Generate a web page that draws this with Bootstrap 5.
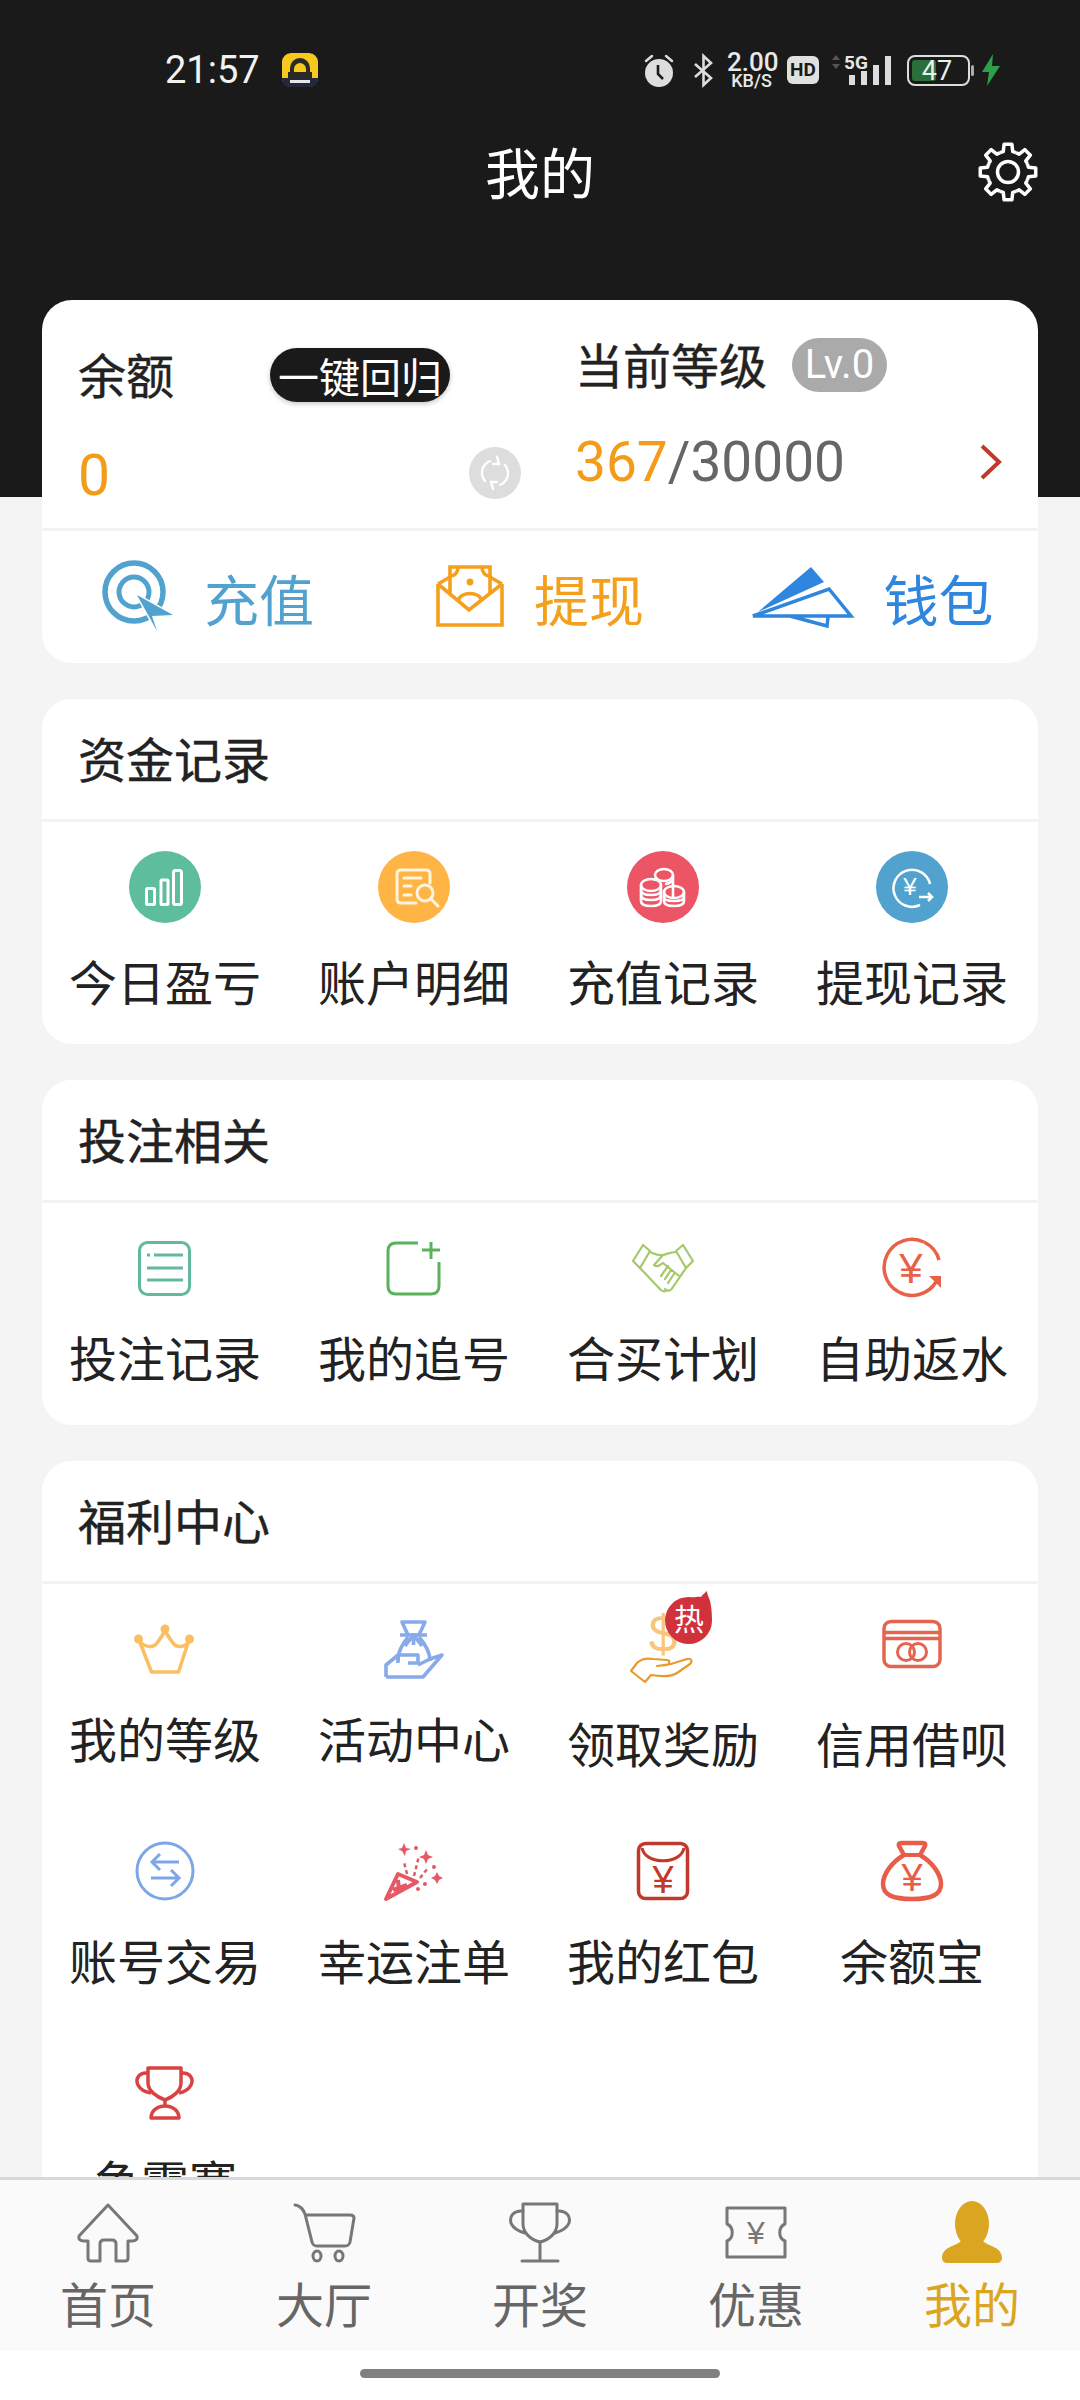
<!DOCTYPE html>
<html lang="zh-CN">
<head>
<meta charset="utf-8">
<title>我的</title>
<link href="https://cdn.jsdelivr.net/npm/bootstrap@5.3.0/dist/css/bootstrap.min.css" rel="stylesheet">
<style>
html,body{width:1080px;height:2400px;overflow:hidden}
body{background:#f4f4f4;color:#222;font-family:"Noto Sans CJK SC","Noto Sans",sans-serif;line-height:1.2}
svg{display:block;overflow:visible}
.ysign{font-family:"Liberation Sans",sans-serif}
.hdr{height:497px;background:#1a1a1a;padding-top:50px}
.sbar{height:40px;padding:0 80px 0 165px;color:#e8e8e8}
.clock{font:400 38px/38px Roboto,sans-serif;color:#f2f2f2;width:93px;margin-right:24px;white-space:nowrap}
.speed{width:49px;font-family:Roboto,sans-serif;font-weight:500;text-align:center;color:#e8e8e8}
.speed-a{font-size:26px;line-height:21px}
.speed-b{font-size:18px;line-height:15px}
.hd{width:32px;height:28px;background:#e0e0e0;color:#1a1a1a;border-radius:6px;font:700 19px/28px Roboto,sans-serif;text-align:center}
.ttl-row{height:60px;margin-top:52px;padding:0 42px}
.ttl{font-size:55px;line-height:57px;height:60px;color:#fff}
.gear{width:60px;height:60px}
.side{width:60px}
.wrap{margin-top:-197px;padding:0 42px;gap:36px}
.panel{--bs-card-border-radius:30px;--bs-card-inner-border-radius:30px;border:0;background:#fff;overflow:hidden}
.panel-top{height:231px;border-bottom:3px solid #f3f3f3}
.lft{padding:48px 19px 0 36px}
.rgt{padding:38px 36px 0 35px}
.lb{font-size:48px;line-height:50px;height:54px;-webkit-text-stroke:.4px #222}
.lb-w{width:192px}
.pill{width:180px;height:54px;border-radius:27px;background:#1a1a1a;color:#fff;font-size:41px;line-height:54px;text-align:center;box-shadow:0 2px 5px rgba(0,0,0,.22)}
.bal{margin-top:46px;height:54px}
.big{font:400 55px/54px Roboto,sans-serif}
.zero{font-size:57px;margin-top:2px}
.or{color:#f39c19}
.gy{color:#666}
.sync{width:52px;height:52px;border-radius:50%;background:#ddd;margin-bottom:4px}
.lv{width:95px;height:54px;border-radius:27px;background:#aaa;color:#fff;font:400 40px/54px Roboto,sans-serif;text-align:center;margin-left:25px}
.lv-t{width:192px}
.prog{margin-top:40px;height:60px}
.acts{height:132px}
.act{font-size:55px;line-height:60px;gap:30px}
.a1{color:#52a2d0}.a2{color:#f5a01c}.a3{color:#2e86de}
.sect{height:123px;border-bottom:3px solid #f3f3f3;padding:0 36px;font-size:48px;line-height:117px;background:#fff;color:#222;-webkit-text-stroke:.4px #222}
.grid-row{margin-left:-1.5px;margin-right:1.5px}
.tile{height:222px;padding-top:29px}
.t4{height:221px}
.ico{width:72px;height:72px;position:relative}
.cap{font-size:48px;line-height:60px;height:60px;color:#222;white-space:nowrap}
.m27{margin-top:27px}.m22{margin-top:22px}.m23{margin-top:23px}
.hot{position:absolute;left:38px;top:-22px;width:48px;height:54px}
.hot-t{position:absolute;left:0;right:0;top:8px;text-align:center;color:#fff;font-size:30px;line-height:36px}
.tabwrap{position:fixed;left:0;right:0;bottom:0;height:223px;background:#fff;border-top:3px solid #d8d8d8}
.tabs{height:171px;background:#fafafa}
.tab{width:216px;padding-top:20px;color:#666;font-size:48px;line-height:56px;text-decoration:none}
.tab .tic{width:64px;height:64px;margin-bottom:10px}
.tab-on{color:#daa520}
.hbar{width:360px;height:9px;border-radius:5px;background:#808080;margin:18px auto 0}
</style>
</head>
<body>
<header class="hdr">
  <div class="sbar d-flex align-items-center">
    <span class="clock">21:57</span>
    <svg width="36" height="34" viewBox="0 0 36 34"><rect width="36" height="34" rx="9" fill="#f7c81e"/><path d="M0 25H36V26a8 8 0 0 1-8 8H8a8 8 0 0 1-8-8Z" fill="#24283a"/><path d="M8 24V15a10 10 0 0 1 20 0V24H24V16a6 6 0 0 0-12 0V24Z" fill="#2c2a22"/><rect x="6" y="19" width="24" height="6" fill="#2c2a22"/><rect x="8" y="27" width="20" height="3" fill="#e6e6e6"/></svg>
    <div class="ms-auto d-flex align-items-center">
      <svg width="32" height="33" viewBox="0 0 32 33"><circle cx="16" cy="19" r="14" fill="#ddd"/><path d="M3 7 9 2M29 7 23 2" stroke="#ddd" stroke-width="2.5" stroke-linecap="round"/><path d="M15 11V20L20 25" fill="none" stroke="#1a1a1a" stroke-width="2.6"/></svg>
      <svg style="margin-left:18px" width="21" height="31" viewBox="0 0 21 31"><path d="M2 9 18 23 10.5 30V1L18 8 2 22" fill="none" stroke="#ddd" stroke-width="2.6"/></svg>
      <div class="speed" style="margin-left:13px"><div class="speed-a">2.00</div><div class="speed-b">KB/S</div></div>
      <div class="hd" style="margin-left:11px">HD</div>
      <svg style="margin-left:13px" width="59" height="32" viewBox="0 0 59 32"><path d="M4 1 8 6H0ZM4 15 0 10H8Z" fill="#555"/><text x="12" y="15" font-family="Roboto,sans-serif" font-weight="700" font-size="19" fill="#e6e6e6">5G</text><rect x="17" y="21" width="6" height="10" fill="#ddd"/><rect x="29" y="17" width="6" height="14" fill="#ddd"/><rect x="41" y="11" width="6" height="20" fill="#ddd"/><rect x="53" y="2" width="6" height="29" fill="#ddd"/></svg>
      <svg style="margin-left:16px" width="67" height="31" viewBox="0 0 67 31"><rect x="1" y="1" width="61" height="29" rx="7" fill="none" stroke="#ddd" stroke-width="2"/><rect x="5" y="5" width="24" height="21" rx="3" fill="#2a6e3a"/><rect x="64" y="10" width="3" height="11" rx="1.5" fill="#aaa"/><text x="30" y="25" text-anchor="middle" font-family="Roboto,sans-serif" font-size="27" fill="#e8f2e8">47</text></svg>
      <svg style="margin-left:8px" width="18" height="32" viewBox="0 0 18 32"><path d="M11 0 0 18H7L5 32 18 12H10Z" fill="#2f9e4a"/></svg>
    </div>
  </div>
  <div class="ttl-row d-flex align-items-center">
    <div class="side"></div>
    <div class="ttl flex-grow-1 text-center">我的</div>
    <svg class="gear" viewBox="0 0 60 60" fill="none" stroke="#fff" stroke-width="3.5" stroke-linejoin="round">
      <defs><path id="tooth" d="M21.96 10.6 25.28 9.55 26.1 2.27H33.9L34.72 9.55 38.04 10.6"/></defs>
      <use href="#tooth"/><use href="#tooth" transform="rotate(45 30 30)"/><use href="#tooth" transform="rotate(90 30 30)"/><use href="#tooth" transform="rotate(135 30 30)"/><use href="#tooth" transform="rotate(180 30 30)"/><use href="#tooth" transform="rotate(225 30 30)"/><use href="#tooth" transform="rotate(270 30 30)"/><use href="#tooth" transform="rotate(315 30 30)"/>
      <circle cx="30" cy="30" r="10.5"/>
    </svg>
  </div>
</header>

<main class="wrap d-flex flex-column">
  <section class="card panel">
    <div class="row g-0 panel-top">
      <div class="col-6 lft">
        <div class="d-flex align-items-center">
          <span class="lb lb-w">余额</span>
          <span class="pill">一键回归</span>
        </div>
        <div class="bal d-flex align-items-center justify-content-between">
          <span class="big or zero">0</span>
          <span class="sync d-flex align-items-center justify-content-center">
            <svg width="32" height="36" viewBox="0 0 32 36" fill="none" stroke="#fff" stroke-width="2.4" stroke-linecap="round"><path d="M6 26C1 20 2 10 11 6"/><path d="M26 10C31 16 30 26 21 30"/><path d="M18 2 20 9 14 9"/><path d="M14 34 12 27 18 27"/></svg>
          </span>
        </div>
      </div>
      <div class="col-6 rgt">
        <div class="d-flex align-items-center">
          <span class="lb lv-t">当前等级</span>
          <span class="lv">Lv.0</span>
        </div>
        <div class="prog d-flex align-items-center justify-content-between">
          <span class="big"><span class="or">367</span><span class="gy">/30000</span></span>
          <svg width="22" height="36" viewBox="0 0 22 36" fill="none" stroke="#c0392b" stroke-width="4"><path d="M2 2 19 18 2 34"/></svg>
        </div>
      </div>
    </div>
    <div class="row g-0 acts">
      <div class="col-4 act a1 d-flex align-items-center justify-content-center">
        <svg width="72" height="72" viewBox="0 0 72 72"><circle cx="32" cy="31" r="29" fill="none" stroke="#52a2d0" stroke-width="5.5"/><circle cx="32" cy="31" r="15" fill="none" stroke="#52a2d0" stroke-width="5"/><path d="M35 34 71 54 50 55 55 70Z" fill="#52a2d0" stroke="#fff" stroke-width="3" paint-order="stroke"/></svg>
        <span>充值</span>
      </div>
      <div class="col-4 act a2 d-flex align-items-center justify-content-center">
        <svg width="68" height="64" viewBox="0 0 68 64" fill="none" stroke="#f5a01c" stroke-width="3.6"><path d="M2 19V60H66V19"/><path d="M2 19 14 12M66 19 54 12"/><path d="M2 19 33 45 66 19"/><path d="M14 28V2H54V28"/><path d="M14 11C19 11 22 7 22 2M54 11C49 11 46 7 46 2"/><circle cx="34" cy="17" r="3.4" fill="#f5a01c" stroke="none"/><path d="M22 36C25 26 43 26 46 36"/></svg>
        <span>提现</span>
      </div>
      <div class="col-4 act a3 d-flex align-items-center justify-content-center">
        <svg width="103" height="60" viewBox="0 0 103 60"><path d="M61 0 74 15 8 45Z" fill="#2e86de"/><path d="M3 49 79 22 101 49ZM40 49 77 59 78 50" fill="none" stroke="#2e86de" stroke-width="3.5"/></svg>
        <span>钱包</span>
      </div>
    </div>
  </section>

  <section class="card panel">
    <div class="sect">资金记录</div>
    <div class="row g-0 grid-row">
      <div class="col-3 tile d-flex flex-column align-items-center">
        <div class="ico"><svg width="72" height="72" viewBox="0 0 72 72"><circle cx="36" cy="36" r="36" fill="#5ebd9c"/><g fill="none" stroke="#fff" stroke-width="3"><rect x="17.5" y="37.5" width="8" height="16" rx="1"/><rect x="32" y="29" width="7" height="24.5" rx="1"/><rect x="44.5" y="19.5" width="8" height="34" rx="2"/></g></svg></div>
        <div class="cap m27">今日盈亏</div>
      </div>
      <div class="col-3 tile d-flex flex-column align-items-center">
        <div class="ico"><svg width="72" height="72" viewBox="0 0 72 72"><circle cx="36" cy="36" r="36" fill="#ffb545"/><g fill="none" stroke="#fff4df" stroke-width="3" stroke-linecap="round"><path d="M52 32V23Q52 19 48 19H23Q19 19 19 23V48Q19 52 23 52H38"/><path d="M26 27H43M26 35H33M26 44H33"/><circle cx="47" cy="42" r="8"/><path d="M53 48 60 55"/></g></svg></div>
        <div class="cap m27">账户明细</div>
      </div>
      <div class="col-3 tile d-flex flex-column align-items-center">
        <div class="ico"><svg width="72" height="72" viewBox="0 0 72 72"><circle cx="36" cy="36" r="36" fill="#ec5565"/><g fill="none" stroke="#fff" stroke-width="2.6"><ellipse cx="37" cy="24" rx="9" ry="6"/><path d="M46 24V46M28 27V30"/><path d="M46 29Q42 33 38 33M46 35H44"/><ellipse cx="24" cy="34" rx="10" ry="6"/><path d="M14 34V50Q14 55 24 55T34 50V34"/><path d="M14 39Q14 44 24 44T34 39M14 44Q14 49 24 49T34 44"/><ellipse cx="47" cy="41" rx="10" ry="6"/><path d="M37 41V50Q37 55 47 55T57 50V41"/><path d="M37 46Q37 50 47 50T57 46"/></g></svg></div>
        <div class="cap m27">充值记录</div>
      </div>
      <div class="col-3 tile d-flex flex-column align-items-center">
        <div class="ico"><svg width="72" height="72" viewBox="0 0 72 72"><circle cx="36" cy="36" r="36" fill="#52a2d0"/><path d="M44 54A18.500 18.500 0 1 1 54 33" fill="none" stroke="#fff" stroke-width="2.5"/><text class="ysign" x="34" y="44" text-anchor="middle" font-size="24" fill="#fff">¥</text><path d="M43 46H56M52 42 56 46 52 50" fill="none" stroke="#fff" stroke-width="2.5"/></svg></div>
        <div class="cap m27">提现记录</div>
      </div>
    </div>
  </section>

  <section class="card panel">
    <div class="sect">投注相关</div>
    <div class="row g-0 grid-row">
      <div class="col-3 tile d-flex flex-column align-items-center">
        <div class="ico"><svg width="72" height="72" viewBox="0 0 72 72" fill="none" stroke="#62b9a0" stroke-width="3"><rect x="10.500" y="10.500" width="50" height="52" rx="8"/><path d="M18 23H21M25 23H54M18 36H54M18 48H54"/></svg></div>
        <div class="cap m22">投注记录</div>
      </div>
      <div class="col-3 tile d-flex flex-column align-items-center">
        <div class="ico"><svg width="72" height="72" viewBox="0 0 72 72" fill="none" stroke="#5cb25c" stroke-width="3"><path d="M40 11H18Q10 11 10 19V54Q10 62 18 62H53Q61 62 61 54V30"/><path d="M53 10V27M44 18H62"/></svg></div>
        <div class="cap m22">我的追号</div>
      </div>
      <div class="col-3 tile d-flex flex-column align-items-center">
        <div class="ico"><svg width="72" height="72" viewBox="0 0 72 72" fill="none" stroke="#a5c96a" stroke-width="2.2" stroke-linejoin="round" stroke-linecap="round"><path d="M16 13 23 19 13 36 6 29ZM56 13 49 19 59 36 66 29Z"/><path d="M23 20C28 22 30 24 36 23C40 22 44 20 49 20"/><path d="M13 36 32 56C35 60 38 60 40 58M59 36 46 55C44 59 40 60 38 57"/><path d="M36 23 27 33C30 36 33 33 36 31L52 44M44 38 38 47M47 42 41 51M41 34 34 44"/></svg></div>
        <div class="cap m22">合买计划</div>
      </div>
      <div class="col-3 tile d-flex flex-column align-items-center">
        <div class="ico"><svg width="72" height="72" viewBox="0 0 72 72"><path d="M48 10A28 28 0 1 0 60 50" fill="none" stroke="#e8624a" stroke-width="3.5"/><path d="M48 10C56 14 61 20 63 28" fill="none" stroke="#e8624a" stroke-width="3.5"/><path d="M53 44H65V56Z" fill="#e8624a"/><text class="ysign" x="35" y="51" text-anchor="middle" font-size="42" fill="#e8624a">¥</text></svg></div>
        <div class="cap m22">自助返水</div>
      </div>
    </div>
  </section>

  <section class="card panel">
    <div class="sect">福利中心</div>
    <div class="row g-0 grid-row">
      <div class="col-3 tile t4 d-flex flex-column align-items-center">
        <div class="ico"><svg width="72" height="72" viewBox="0 0 72 72" fill="#f9bf62"><circle cx="9.500" cy="26" r="4.500"/><circle cx="36" cy="16" r="4.500"/><circle cx="60.500" cy="26" r="4.500"/><path d="M10 27 22.500 59H49.500L60 27C58 34 48 36 44 30 41 26 38 22 36 17 34 22 31 26 28 30 24 36 14 34 10 27Z" fill="none" stroke="#f9bf62" stroke-width="3.5" stroke-linejoin="round"/></svg></div>
        <div class="cap m22">我的等级</div>
      </div>
      <div class="col-3 tile t4 d-flex flex-column align-items-center">
        <div class="ico"><svg width="72" height="72" viewBox="0 0 72 72" fill="none" stroke="#88a9ea" stroke-width="3.6" stroke-linejoin="round"><path d="M24 9H47L41 22H30Z"/><path d="M22 22H49M35.500 22 27 33M35.500 22 44 33M35.500 22V32"/><path d="M30 24C24 32 19 40 20 50M41 24C48 32 52 40 52 48"/><path d="M8 64V52L20 42H40V50H30M8 64H45L64 42 52 46 40 52"/></svg></div>
        <div class="cap m22">活动中心</div>
      </div>
      <div class="col-3 tile t4 d-flex flex-column align-items-center">
        <div class="ico">
          <svg width="72" height="72" viewBox="0 0 72 72" fill="none"><text class="ysign" x="36" y="39" text-anchor="middle" font-size="52" fill="#f9c57c">$</text><path d="M4 58 10 50C14 46 20 45 26 46L40 47C43 47 43 51 40 52L30 53 44 51 60 46C64 45 66 48 63 51L50 60C44 64 36 64 24 62L18 69ZM4 58 18 69" stroke="#e89a2c" stroke-width="2.200" stroke-linejoin="round"/></svg>
          <div class="hot">
            <svg width="48" height="54" viewBox="0 0 48 54"><path d="M24 6C30 7 33 5 36 6 38 3 40 2 42 0 42 4 44 6 45 10 46 14 47 20 47 30A23.500 23.500 0 1 1 24 6Z" fill="#d0313a"/></svg>
            <div class="hot-t">热</div>
          </div>
        </div>
        <div class="cap m27">领取奖励</div>
      </div>
      <div class="col-3 tile t4 d-flex flex-column align-items-center">
        <div class="ico"><svg width="72" height="72" viewBox="0 0 72 72" fill="none" stroke="#e4654f" stroke-width="3.500"><rect x="8" y="8.500" width="56" height="45" rx="7"/><path d="M8 19.500H64M8 25.500H64"/><circle cx="30" cy="39" r="8.500" stroke-width="3"/><circle cx="42" cy="39" r="8.500" stroke-width="3"/></svg></div>
        <div class="cap m27">信用借呗</div>
      </div>
      <div class="col-3 tile t4 d-flex flex-column align-items-center">
        <div class="ico"><svg width="72" height="72" viewBox="0 0 72 72" fill="none" stroke="#7ea6e6" stroke-width="3"><circle cx="36" cy="37" r="28"/><path d="M50 28H23M31 20 23 28 31 36M22 44H50M42 36 50 44 42 52"/></svg></div>
        <div class="cap m23">账号交易</div>
      </div>
      <div class="col-3 tile t4 d-flex flex-column align-items-center">
        <div class="ico"><svg width="72" height="72" viewBox="0 0 72 72" fill="#e65866"><path d="M8 65 20 40 39 48ZM15 56 29 51M20 46 21 56" fill="none" stroke="#e65866" stroke-width="4" stroke-linejoin="round"/><path d="M29 40 26 28M36 42 41 22M42 44 50 34" fill="none" stroke="#e65866" stroke-width="2.500" stroke-dasharray="4 3"/><path d="M26 9 28 14 33 15 28 17 27 22 24 17 20 15 24 14ZM48 16 50 21 55 23 50 25 48 30 46 25 41 23 46 21ZM59 38 61 42 65 44 61 46 59 50 57 46 53 44 57 42Z"/><circle cx="38" cy="14" r="2"/><circle cx="56" cy="33" r="2"/><circle cx="47" cy="50" r="2"/><circle cx="40" cy="55" r="2"/></svg></div>
        <div class="cap m23">幸运注单</div>
      </div>
      <div class="col-3 tile t4 d-flex flex-column align-items-center">
        <div class="ico"><svg width="72" height="72" viewBox="0 0 72 72"><rect x="11.500" y="9.500" width="49" height="55" rx="7" fill="none" stroke="#c0392b" stroke-width="3.500"/><path d="M15 14C18 31 54 31 57 14" fill="none" stroke="#c0392b" stroke-width="3"/><text class="ysign" x="36" y="59" text-anchor="middle" font-size="38" fill="#c0392b">¥</text></svg></div>
        <div class="cap m23">我的红包</div>
      </div>
      <div class="col-3 tile t4 d-flex flex-column align-items-center">
        <div class="ico"><svg width="72" height="72" viewBox="0 0 72 72"><path d="M25 9H47Q50 9 49 12L44 21C56 28 65 40 65 50 65 61 55 65 36 65S7 61 7 50C7 40 16 28 28 21L23 12Q22 9 25 9Z" fill="none" stroke="#e85c4a" stroke-width="4.500" stroke-linejoin="round"/><path d="M28 21H44" stroke="#e85c4a" stroke-width="4"/><text class="ysign" x="36" y="57" text-anchor="middle" font-size="38" fill="#e85c4a">¥</text></svg></div>
        <div class="cap m23">余额宝</div>
      </div>
      <div class="col-3 tile t4 d-flex flex-column align-items-center">
        <div class="ico"><svg width="72" height="72" viewBox="0 0 72 72" fill="none" stroke="#d94242" stroke-width="3.500" stroke-linejoin="round"><path d="M19 13H52V28C52 36 44 42 36 45 28 42 19 36 19 28Z"/><path d="M19 18C10 17 6 24 9 30 11 34 16 37 22 38M52 18C61 17 65 24 62 30 60 34 55 37 50 38"/><path d="M36 45V51M22 63C22 56 28 51 36 51S50 56 50 63Z"/></svg></div>
        <div class="cap m23">争霸赛</div>
      </div>
    </div>
  </section>
</main>

<footer class="tabwrap">
  <nav class="tabs d-flex">
    <a class="tab d-flex flex-column align-items-center" href="#">
      <svg class="tic" viewBox="0 0 64 64" fill="none" stroke="#777" stroke-width="3" stroke-linejoin="round"><path d="M32 5 3 36Q2 41 8 41H12V58Q12 61 15 61H24V44Q24 40 28 40H36Q40 40 40 44V61H49Q52 61 52 58V41H56Q62 41 61 36Z"/></svg>
      <span>首页</span>
    </a>
    <a class="tab d-flex flex-column align-items-center" href="#">
      <svg class="tic" viewBox="0 0 64 64" fill="none" stroke="#777" stroke-width="3" stroke-linejoin="round" stroke-linecap="round"><path d="M3 5Q10 6 13 14L20 42Q21 46 25 46H53Q57 46 58 42L62 18Q62 15 58 15H14"/><ellipse cx="25" cy="56" rx="4" ry="5"/><ellipse cx="47" cy="56" rx="4" ry="5"/></svg>
      <span>大厅</span>
    </a>
    <a class="tab d-flex flex-column align-items-center" href="#">
      <svg class="tic" viewBox="0 0 64 64" fill="none" stroke="#777" stroke-width="3" stroke-linejoin="round" stroke-linecap="round"><path d="M15 4H49V24C49 33 41 40 32 42 23 40 15 33 15 24Z"/><path d="M15 11C6 10 1 16 3 23 5 28 10 31 17 33M49 11C58 10 63 16 61 23 59 28 54 31 47 33"/><path d="M32 42V61M14 61H50"/></svg>
      <span>开奖</span>
    </a>
    <a class="tab d-flex flex-column align-items-center" href="#">
      <svg class="tic" viewBox="0 0 64 64" fill="none"><path d="M3 8H61V24C54 27 54 38 61 41V57H3V41C10 38 10 27 3 24Z" stroke="#777" stroke-width="3" stroke-linejoin="round"/><text class="ysign" x="32" y="44" text-anchor="middle" font-size="32" fill="#777">¥</text></svg>
      <span>优惠</span>
    </a>
    <a class="tab tab-on d-flex flex-column align-items-center" href="#">
      <svg class="tic" viewBox="0 0 64 64" fill="#daa520"><ellipse cx="32" cy="24" rx="17" ry="23"/><path d="M22 40C18 46 2 46 2 58Q2 63 8 63H56Q62 63 62 58C62 46 46 46 42 40Z"/></svg>
      <span>我的</span>
    </a>
  </nav>
  <div class="hbar"></div>
</footer>
</body>
</html>
